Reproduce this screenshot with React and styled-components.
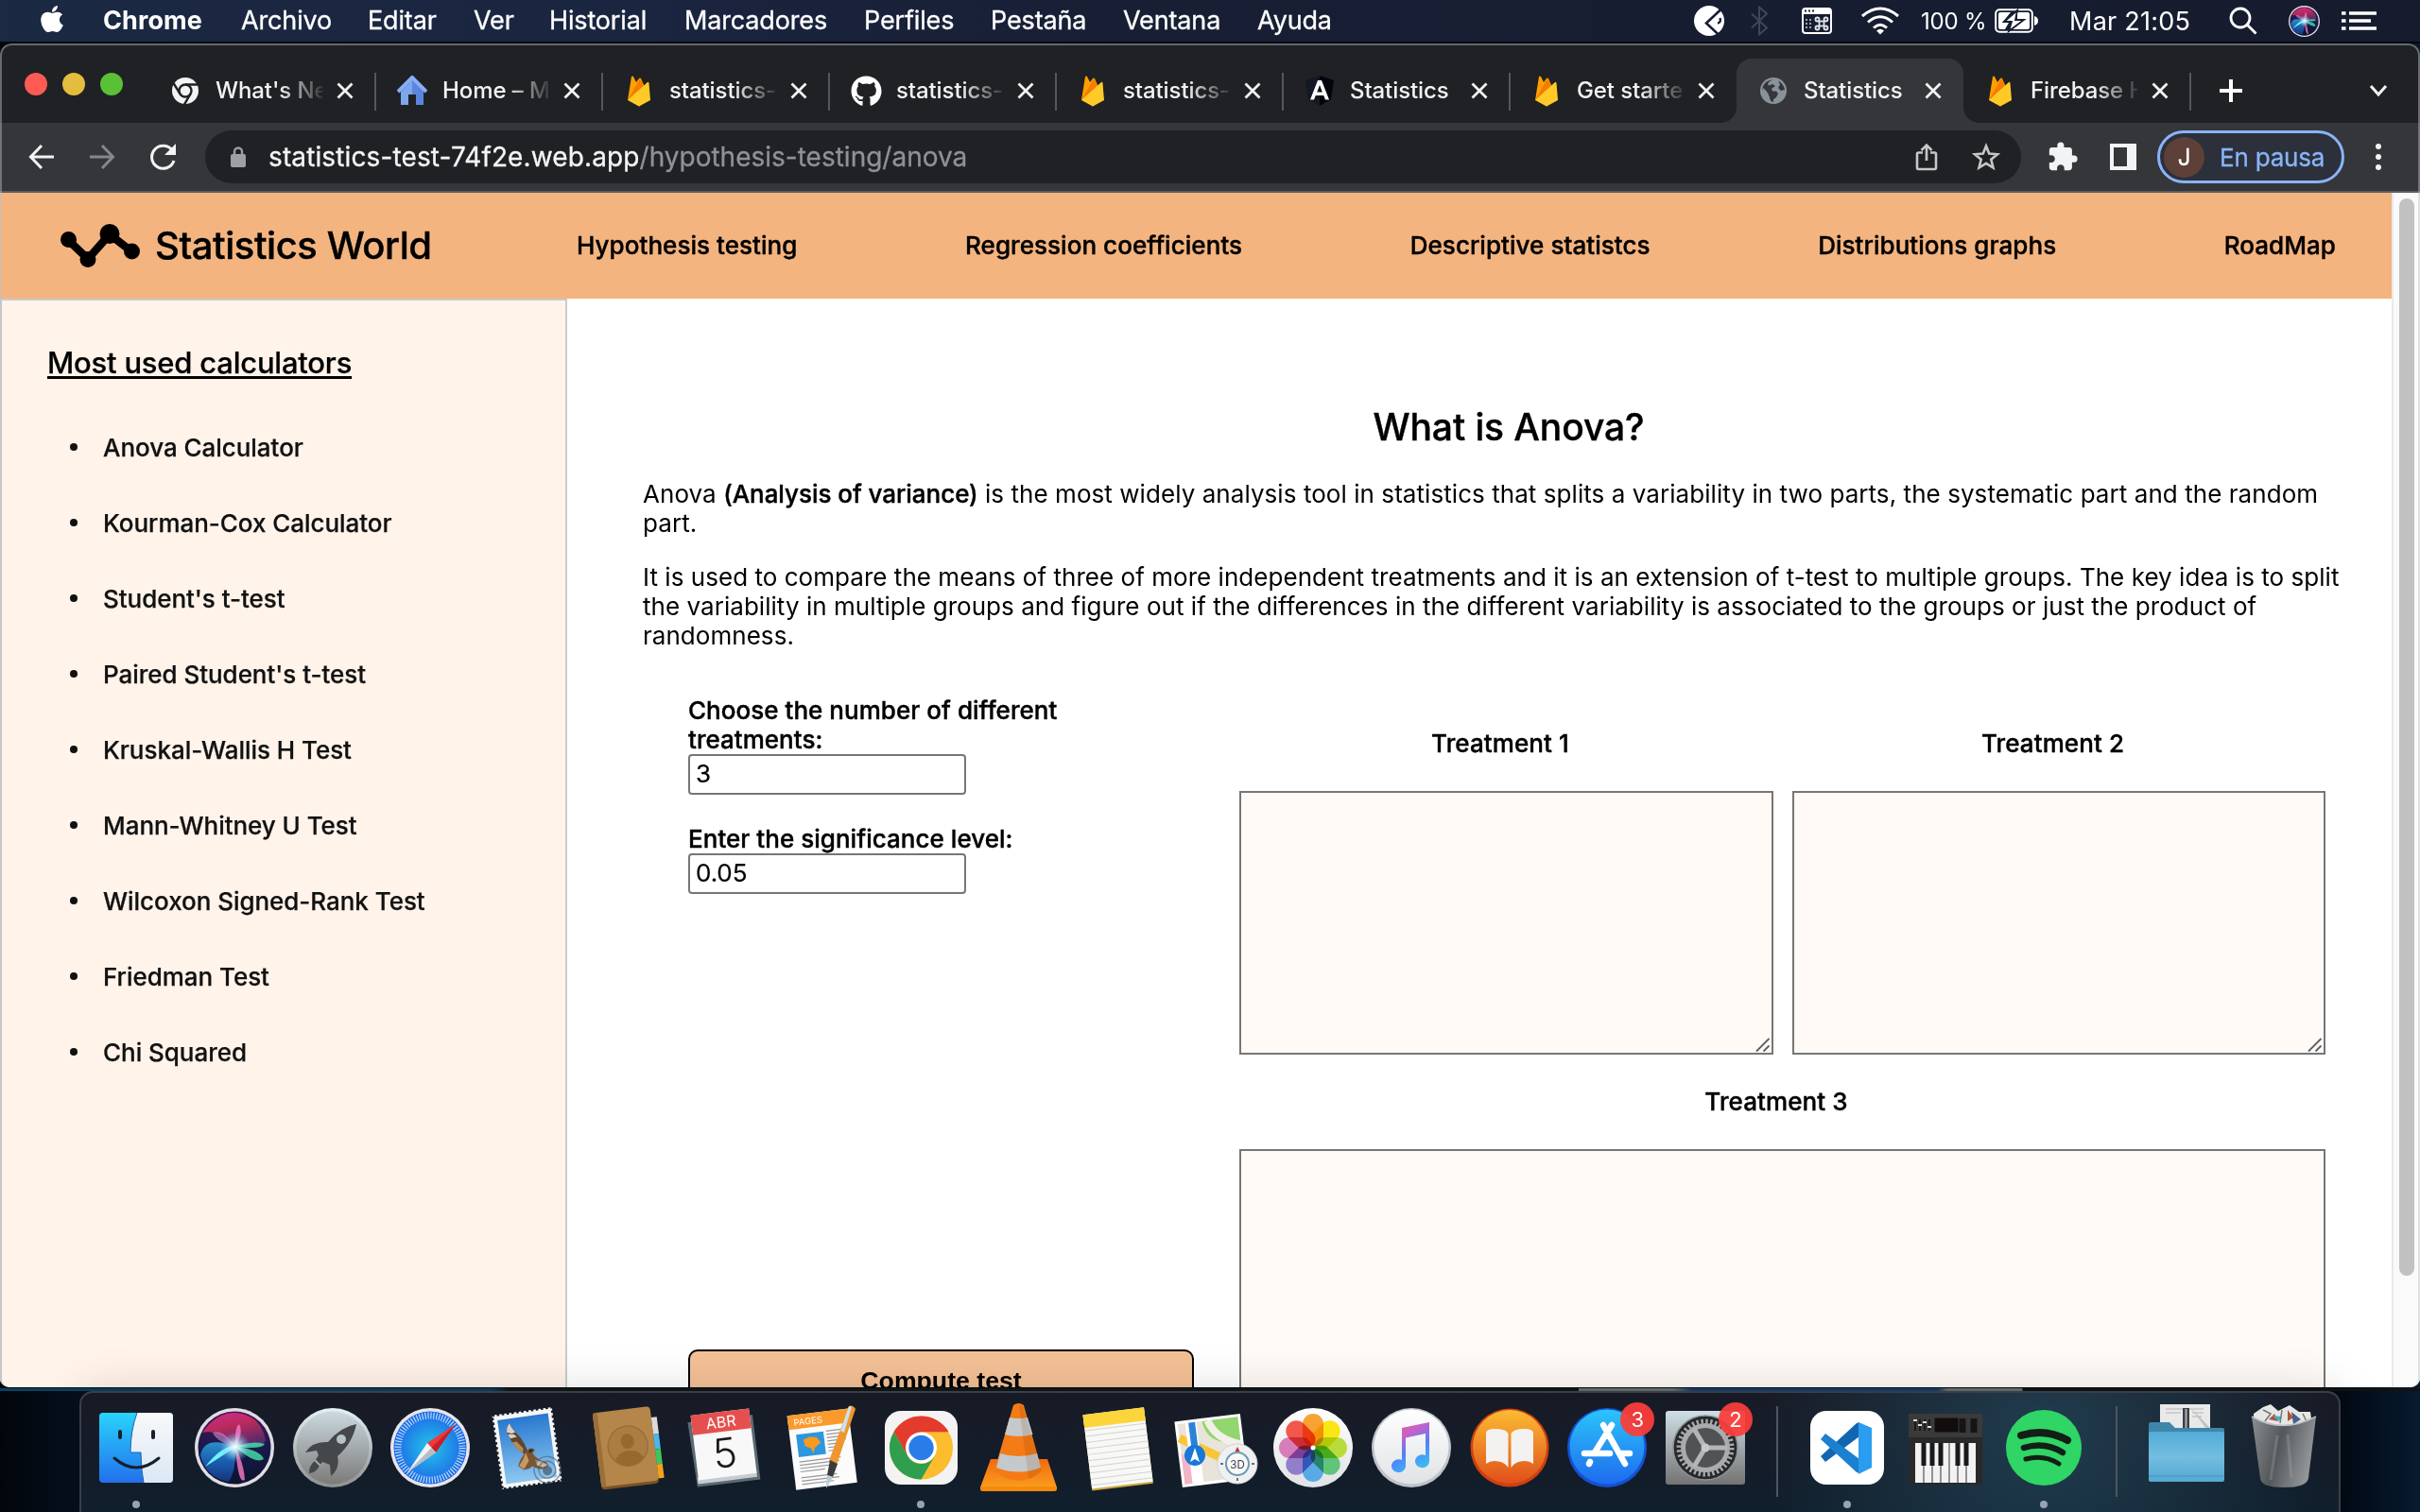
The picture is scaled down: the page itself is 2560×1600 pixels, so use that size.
import React from "react";
import styled, { createGlobalStyle, css } from "styled-components";
import { FaApple, FaGithub } from "react-icons/fa";
import { MdExtension } from "react-icons/md";

const Global = createGlobalStyle`
  *, *::before, *::after { box-sizing: border-box; }
  html, body { margin: 0; padding: 0; }
  body { font-family: Inter, "Liberation Sans", sans-serif; background: #050b14; overflow: hidden; }
  svg { display: block; flex: none; }
`;

const mediumText = css`
  font-weight: 500;
  -webkit-text-stroke: 0.4px currentColor;
`;

/* ---------- desktop ---------- */

const Desktop = styled.div`
  width: 2560px;
  height: 1600px;
  display: flex;
  flex-direction: column;
  overflow: hidden;
  background:
    linear-gradient(90deg, #0b3f5c 0 520px, #101716 540px 1670px, #66706c 1670px 1770px, #173d6b 1790px 2050px, #66706c 2060px 2139px, #101313 2140px) 0 1469px / 100% 3px no-repeat,
    linear-gradient(90deg, #02060c, #06101d 84px, #030a14 2476px, #071a30);
`;

const MenuBar = styled.header`
  height: 46px;
  flex: none;
  display: flex;
  align-items: center;
  padding: 0 46px 0 42px;
  border-bottom: 2px solid #03070f;
  background: linear-gradient(90deg, #1c2942 0%, #1a2540 25%, #181f35 45%, #161c2d 100%);
  color: #fff;
`;

const AppleSlot = styled.div`
  width: 67px;
  padding-bottom: 5px;
`;

const MenuItem = styled.span`
  width: ${(p) => p.$w}px;
  flex: none;
  font-size: 27px;
  line-height: 44px;
  white-space: nowrap;
  letter-spacing: ${(p) => (p.$bold ? 0.1 : -0.15)}px;
  font-weight: ${(p) => (p.$bold ? 700 : 400)};
  -webkit-text-stroke: ${(p) => (p.$bold ? 0 : 0.3)}px currentColor;
`;

const StatusArea = styled.div`
  margin-left: auto;
  display: flex;
  align-items: center;
  height: 44px;
`;

const StatusItem = styled.div`
  width: ${(p) => p.$w}px;
  flex: none;
  display: flex;
  align-items: center;
  font-size: ${(p) => p.$size || 27}px;
  letter-spacing: ${(p) => p.$ls || 0}px;
  white-space: nowrap;
`;

/* ---------- browser window ---------- */

const Window = styled.section`
  position: relative;
  height: 1422px;
  flex: none;
  display: flex;
  flex-direction: column;
  border-radius: 12px 12px 10px 10px;
  overflow: hidden;
  background: #202124;
  &::after {
    content: "";
    position: absolute;
    inset: 0;
    border: 2px solid rgba(185, 195, 205, 0.45);
    border-bottom: 0;
    border-radius: 12px 12px 10px 10px;
    pointer-events: none;
  }
`;

const TabStrip = styled.div`
  height: 84px;
  flex: none;
  display: flex;
  align-items: flex-end;
`;

const Lights = styled.div`
  width: 157px;
  height: 84px;
  padding: 31px 0 0 26px;
  display: flex;
  gap: 16px;
`;

const Light = styled.span`
  width: 24px;
  height: 24px;
  border-radius: 50%;
  background: ${(p) => p.$c};
`;

const Tab = styled.div`
  position: relative;
  width: 240px;
  height: 68px;
  flex: none;
  display: flex;
  align-items: center;
  padding-left: 23px;
  ${(p) =>
    p.$sep &&
    css`
      &::after {
        content: "";
        position: absolute;
        right: -1px;
        top: 15px;
        width: 2px;
        height: 40px;
        background: #55575b;
      }
    `}
  ${(p) =>
    p.$active &&
    css`
      background: #35363a;
      border-radius: 16px 16px 0 0;
      &::before {
        content: "";
        position: absolute;
        bottom: 0;
        left: -16px;
        right: -16px;
        height: 16px;
        background:
          radial-gradient(circle at 0 0, transparent 15.5px, #35363a 16px) left / 16px 16px no-repeat,
          radial-gradient(circle at 100% 0, transparent 15.5px, #35363a 16px) right / 16px 16px no-repeat;
      }
    `}
`;

const TabTitle = styled.span`
  width: 113px;
  margin: 0 15px 0 16px;
  white-space: nowrap;
  font-size: 24px;
  letter-spacing: -0.1px;
  line-height: 34px;
  color: #f1f3f4;
  font-weight: 500;
  ${(p) =>
    p.$fade &&
    css`
      mask-image: linear-gradient(90deg, #000 60%, rgba(0, 0, 0, 0.1) 100%);
    `}
`;

const StripEnd = styled.div`
  flex: 1;
  height: 68px;
  display: flex;
  align-items: center;
  justify-content: space-between;
  padding: 0 34px 0 31px;
`;

const Toolbar = styled.div`
  height: 74px;
  flex: none;
  display: flex;
  align-items: center;
  padding-left: 30px;
  border-bottom: 2px solid #5b5c61;
  background: #35363a;
`;

const NavIcons = styled.div`
  width: 187px;
  display: flex;
  gap: 36px;
`;

const Omnibox = styled.div`
  width: 1921px;
  height: 56px;
  display: flex;
  align-items: center;
  padding: 0 22px 0 27px;
  border-radius: 28px;
  background: #202124;
`;

const Url = styled.span`
  flex: 1;
  margin-left: 24px;
  font-size: 28px;
  line-height: 36px;
  color: #f4f5f6;
  -webkit-text-stroke: 0.3px currentColor;
  b {
    font-weight: 400;
    letter-spacing: 0.12px;
  }
  em {
    font-style: normal;
    color: #8f9195;
  }
`;

const OmniActions = styled.div`
  display: flex;
  gap: 36px;
`;

const ToolIcons = styled.div`
  width: 144px;
  padding-left: 27px;
  display: flex;
  align-items: center;
  gap: 33px;
`;

const ProfilePill = styled.div`
  width: 198px;
  height: 56px;
  display: flex;
  align-items: center;
  border: 3px solid #8ab4f8;
  border-radius: 28px;
  padding-left: 4px;
  background: #2b303b;
  color: #8ab4f8;
  font-size: 26px;
  letter-spacing: -0.2px;
  white-space: nowrap;
  -webkit-text-stroke: 0.3px currentColor;
`;

const Avatar = styled.span`
  width: 43px;
  height: 43px;
  margin-right: 16px;
  border-radius: 50%;
  background: #5d4037;
  color: #fff;
  font-size: 24px;
  line-height: 43px;
  text-align: center;
`;

const Dots = styled.div`
  margin-left: 33px;
  display: grid;
  gap: 5px;
  i {
    width: 6px;
    height: 6px;
    border-radius: 50%;
    background: #f1f3f4;
  }
`;

/* ---------- page ---------- */

const Viewport = styled.div`
  flex: 1;
  min-height: 0;
  display: flex;
  background: #fff;
`;

const Page = styled.div`
  width: 2530px;
  flex: none;
  display: flex;
  flex-direction: column;
`;

const ScrollTrack = styled.div`
  flex: 1;
  padding: 6px 0 0 6px;
  border-left: 2px solid #e9e9e9;
  background: #fafafa;
`;

const ScrollThumb = styled.div`
  width: 16px;
  height: 1140px;
  border-radius: 8px;
  background: #c1c1c1;
`;

const SiteHeader = styled.header`
  height: 112px;
  flex: none;
  display: flex;
  align-items: center;
  padding: 0 59px 0 64px;
  background: #f4b47f;
`;

const Brand = styled.div`
  width: 546px;
  display: flex;
  align-items: center;
  gap: 16px;
  font-size: 40px;
  line-height: 48px;
  letter-spacing: -0.45px;
  white-space: nowrap;
  ${mediumText}
  span {
    padding-bottom: 1px;
  }
`;

const SiteNav = styled.nav`
  flex: 1;
  display: flex;
  justify-content: space-between;
  padding-bottom: 1px;
  font-size: 26px;
  letter-spacing: 0.05px;
  ${mediumText}
`;

const Body = styled.div`
  flex: 1;
  min-height: 0;
  display: flex;
`;

const Sidebar = styled.aside`
  width: 600px;
  flex: none;
  padding: 47px 0 0 48px;
  border: 2px solid #cbcbcb;
  border-width: 2px 2px 0 2px;
  background: #fff3ea;
`;

const SideHeading = styled.h2`
  margin: 0;
  font-size: 31px;
  line-height: 38px;
  font-weight: 500;
  -webkit-text-stroke: 0.25px currentColor;
  letter-spacing: -0.22px;
  text-decoration: underline;
  text-decoration-thickness: 3px;
  text-underline-offset: 3px;
  text-decoration-skip-ink: none;
`;

const CalcList = styled.ul`
  list-style: none;
  margin: 30px 0 0;
  padding: 0 0 0 24px;
`;

const CalcItem = styled.li`
  height: 80px;
  display: flex;
  align-items: center;
  font-size: 26px;
  font-weight: 500;
  -webkit-text-stroke: 0.25px currentColor;
  letter-spacing: -0.04px;
  color: #111;
  &::before {
    content: "";
    width: 8px;
    height: 8px;
    margin-right: 27px;
    border-radius: 50%;
    background: #111;
  }
`;

const Main = styled.main`
  flex: 1;
  padding: 112px 50px 0 80px;
`;

const Title = styled.h1`
  margin: 0;
  padding-left: 32px;
  text-align: center;
  font-size: 39px;
  line-height: 48px;
  letter-spacing: -0.1px;
  ${mediumText}
`;

const Para = styled.p`
  margin: ${(p) => p.$mt}px 0 0;
  font-size: 26px;
  line-height: 31px;
  letter-spacing: ${(p) => p.$ls}px;
  white-space: nowrap;
  b {
    letter-spacing: -0.05px;
    ${mediumText}
  }
`;

const Form = styled.div`
  display: flex;
  margin-top: 48px;
  padding-left: 48px;
`;

const Controls = styled.div`
  width: 535px;
  margin-right: 48px;
`;

const Field = styled.label`
  display: block;
  width: 420px;
  margin-bottom: 31px;
  font-size: 26px;
  line-height: 31px;
  letter-spacing: 0.03px;
  ${mediumText}
`;

const Input = styled.input`
  display: block;
  width: 294px;
  height: 43px;
  margin: 0;
  padding: 1px 6px 4px;
  border: 2px solid #767676;
  border-radius: 4px;
  font: 400 26px Inter, "Liberation Sans", sans-serif;
  letter-spacing: -0.1px;
  -webkit-text-stroke: 0.2px currentColor;
`;

const Compute = styled.button`
  width: 100%;
  height: 64px;
  margin-top: 451px;
  padding: 0;
  border: 2px solid #000;
  border-radius: 10px;
  background: #f4c196;
  color: #000;
  font: 700 26.67px/62px "Liberation Sans", Arial, sans-serif;
`;

const Treatments = styled.div`
  flex: none;
  width: 1149px;
  display: grid;
  grid-template-columns: 565px 564px;
  column-gap: 20px;
  align-content: start;
  padding-top: 1px;
`;

const Treatment = styled.div`
  grid-column: ${(p) => (p.$wide ? "1 / -1" : "auto")};
  padding-top: 34px;
`;

const TreatmentName = styled.div`
  text-align: center;
  padding-right: 13px;
  font-size: 26px;
  line-height: 32px;
  letter-spacing: 0.1px;
  ${mediumText}
`;

const AreaBox = styled.div`
  position: relative;
  height: 279px;
  margin-top: 34px;
`;

const Area = styled.textarea`
  display: block;
  width: 100%;
  height: 100%;
  border: 2px solid #767676;
  background: #fffaf6;
  resize: none;
`;

const Grip = styled.svg`
  position: absolute;
  right: 3px;
  bottom: 2px;
`;

/* ---------- dock ---------- */

const Dock = styled.footer`
  position: relative;
  width: 2392px;
  height: 140px;
  flex: none;
  margin: 4px 0 0 84px;
  display: flex;
  padding-left: 6px;
  border: 2px solid #3a3f48;
  border-radius: 14px 14px 0 0;
  background:
    radial-gradient(ellipse 300px 260px at 2076px 40px, rgba(36, 72, 92, 0.75), rgba(36, 72, 92, 0)),
    linear-gradient(180deg, #181b26, #141c29 55%, #10202d);
  box-shadow: 0 0 50px rgba(0, 0, 0, 0.15);
`;

const Slot = styled.div`
  position: relative;
  width: 103.75px;
  height: 126px;
  flex: none;
`;

const Running = styled.i`
  position: absolute;
  left: 48px;
  top: 114px;
  width: 8px;
  height: 8px;
  border-radius: 50%;
  background: #98a2b0;
`;

const Badge = styled.span`
  position: absolute;
  left: 66px;
  top: 10px;
  width: 36px;
  height: 36px;
  border-radius: 50%;
  background: rgba(250, 62, 58, 0.94);
  color: #fff;
  font-size: 22px;
  line-height: 36px;
  text-align: center;
`;

const Divider = styled.i`
  width: 2px;
  height: 96px;
  margin: 14px ${(p) => p.$r}px 0 ${(p) => p.$l}px;
  flex: none;
  background: #4e5560;
`;

/* ---------- small drawings ---------- */

const Firebase = () => (
  <svg width="24" height="33" viewBox="0 0 24 33">
    <path d="M0 26 4 1Q5 0 6 1L9 7 12 3Q13 2 14 3L24 26Z" fill="#ffa000" />
    <path d="M0 26 13 3 17 11Z" fill="#f57c00" />
    <path d="M0 26 21 7Q22 6 22.500 8L24 26 13 32Q12 33 11 32Z" fill="#ffca28" />
  </svg>
);
const ChromeMono = () => (
  <svg width="30" height="30" viewBox="0 0 30 30">
    <circle cx="15" cy="15" r="14" fill="#f1f3f4" />
    <g stroke="#202124" strokeWidth="2.400" fill="none">
      <circle cx="15" cy="15" r="6.500" />
      <path d="M15 8.500H28M9.400 18.200 2.500 7M20.600 18.200 14 29.500" />
    </g>
    <circle cx="15" cy="15" r="3.800" fill="#f1f3f4" />
  </svg>
);
const House = () => (
  <svg width="32" height="32" viewBox="0 0 32 32">
    <path d="M4 14 16 3 28 14V31H20V20H12V31H4Z" fill="#5b86dd" />
    <path d="M4 18 16 5V20H12V31H4Z" fill="#7ea6ee" />
    <path d="M1 17 16 2 31 17" stroke="#88aef3" strokeWidth="4" fill="none" />
  </svg>
);
const Angular = () => (
  <svg width="32" height="34" viewBox="0 0 32 34">
    <path d="M16 1 31 6 28 26 16 33 4 26 1 6Z" fill="#141824" />
    <path d="M16 1 31 6 28 26 16 33Z" fill="#03050b" />
    <path fillRule="evenodd" d="M14 6H18L26 26.500H22L20.200 22H11.800L10 26.500H6ZM16 11 13.200 18.500H18.800Z" fill="#fff" />
  </svg>
);
const Globe = () => (
  <svg width="30" height="30" viewBox="0 0 30 30">
    <circle cx="15" cy="15" r="14" fill="#8a9299" />
    <path d="M16 3.500C10 4 8 8 10 9.500L14 8 17 10 13 13 14 15.500H18L20 18 18 22 15 24V27C10 26 12 22 10 20L3.500 14C3 8 9 3 16 3.500Z" fill="#35363a" />
    <path d="M20 4.500Q26 7.500 27 14L23 15 20 12 22 8.500Z" fill="#35363a" />
    <path d="M4 12Q7 14 10 19L8 23Q3 19 4 12Z" fill="#8a9299" />
    <path d="M11 5 15 6 10 9.500Z" fill="#8a9299" />
  </svg>
);
const Cross = () => (
  <svg width="18" height="18" viewBox="0 0 18 18" stroke="#f1f3f4" strokeWidth="2.800">
    <path d="M1.500 1.500 16.500 16.500M16.500 1.500 1.500 16.500" />
  </svg>
);

const icons = { chrome: ChromeMono, house: House, fire: Firebase, angular: Angular, globe: Globe };

const IconCell = styled.span`
  width: 32px;
  flex: none;
  display: flex;
  justify-content: center;
`;

const tabs = [
  { icon: "chrome", title: "What's Ne", fade: true, sep: true },
  { icon: "house", title: "Home – M", fade: true, sep: true },
  { icon: "fire", title: "statistics-", fade: true, sep: true },
  { icon: "github", title: "statistics-", fade: true, sep: true },
  { icon: "fire", title: "statistics-", fade: true, sep: true },
  { icon: "angular", title: "Statistics", sep: true },
  { icon: "fire", title: "Get starte", fade: true },
  { icon: "globe", title: "Statistics", active: true },
  { icon: "fire", title: "Firebase H", fade: true, sep: true },
];

const menus = [
  ["Chrome", 146, true],
  ["Archivo", 134],
  ["Editar", 112],
  ["Ver", 80],
  ["Historial", 143],
  ["Marcadores", 190],
  ["Perfiles", 134],
  ["Pestaña", 140],
  ["Ventana", 142],
  ["Ayuda", 90],
];

const calculators = [
  "Anova Calculator",
  "Kourman-Cox Calculator",
  "Student's t-test",
  "Paired Student's t-test",
  "Kruskal-Wallis H Test",
  "Mann-Whitney U Test",
  "Wilcoxon Signed-Rank Test",
  "Friedman Test",
  "Chi Squared",
];

/* ---------- dock drawings ---------- */

const Finder = () => (
  <>
    <rect x="13" y="21" width="78" height="74" rx="4" fill="url(#finderL)" />
    <path d="M53 21H87Q91 21 91 25V91Q91 95 87 95H60Q57 80 57 63H46Q46 40 53 21Z" fill="url(#finderR)" />
    <path d="M53 21Q46 40 46 63H57Q57 80 60 95" fill="none" stroke="#1d5fae" strokeWidth="1" />
    <path d="M35 41v6M70 41v6" stroke="#16202c" strokeWidth="4" strokeLinecap="round" />
    <path d="M29 69Q52 89 76 69" fill="none" stroke="#16202c" strokeWidth="3" strokeLinecap="round" />
  </>
);
const Siri = () => (
  <>
    <circle cx="52" cy="58" r="42" fill="#dedde2" />
    <circle cx="52" cy="58" r="38.500" fill="url(#siriBg)" />
    <path d="M18 42Q33 20 54 21 80 24 85 50 82 58 68 56L53 57Q38 38 18 42Z" fill="url(#siriPink)" />
    <path d="M16 66Q20 44 53 57 54 82 46 94 22 90 16 66Z" fill="url(#siriBlue)" />
    <path d="M53 57Q70 50 84 54 82 60 53 57ZM53 57Q80 60 83 70 74 76 53 57Z" fill="#46e4ae" opacity=".8" />
    <path d="M53 57Q62 75 63 92 56 98 53 57ZM53 57Q52 36 57 33 62 42 53 57Z" fill="#ff7cc6" opacity=".8" />
    <path d="M53 57Q40 38 29 42 33 52 53 57Z" fill="#e9a4e8" opacity=".5" />
    <path d="M21 78Q40 54 53 57 42 65 21 78Z" fill="#6ff2f7" />
    <circle cx="53" cy="57" r="16" fill="url(#glow)" />
  </>
);
const Launchpad = () => (
  <>
    <circle cx="52" cy="58" r="42" fill="url(#launchRim)" />
    <circle cx="52" cy="58" r="38.500" fill="url(#launch)" />
    <path d="M77 33Q60 36 47 52 30 51 23 63L35 61 37 66 33 72Q27 76 27 85 35 84 38 77L41 73 49 76 50 88Q60 80 57 67 73 53 77 33Z" fill="#45484b" />
    <circle cx="61" cy="49" r="5" fill="#b6c2c7" />
    <path d="M33 71 39 77" stroke="#a2a9ab" strokeWidth="2" />
  </>
);
const Safari = () => (
  <>
    <circle cx="52" cy="58" r="42" fill="#e6e6ea" />
    <circle cx="52" cy="58" r="38.500" fill="url(#safari)" />
    <circle cx="52" cy="58" r="34" fill="none" stroke="#e7f4ff" strokeWidth="7" strokeDasharray="1.100 1.870" opacity=".85" />
    <path d="M79 33 49 53 58 63Z" fill="#f0383a" />
    <path d="M79 33 53.500 58 58 63Z" fill="#c81e26" />
    <path d="M28 84 49 53 58 63Z" fill="#f2f2f4" />
    <path d="M28 84 53.500 58 58 63Z" fill="#b9bcc2" />
  </>
);
const Mail = () => (
  <g transform="translate(-1.500 0) rotate(-8 52 58)">
    <rect x="20" y="19" width="64" height="79" fill="#f6f6f6" />
    <rect x="20" y="19" width="64" height="79" fill="none" stroke="#171d29" strokeWidth="3" strokeDasharray="2.600 2.600" />
    <rect x="25" y="25" width="54" height="68" fill="url(#sky)" />
    <path d="M37 30 34 34 33 39 35 44 37 50 42 58 47 63 50 65 52 61 50 54 47 47 43 41 40 36Z" fill="#5f452f" />
    <path d="M37 30 34 34 33 39 38 41 42 40 39 35ZM34 41 36 46 43 45 40 42Z" fill="#d9d2c8" />
    <path d="M37 50 42 58 47 63 48 58 42 50Z" fill="#b98a58" />
    <path d="M50 62 55 59 59 60 60 62 57 64 59 68 64 73 70 76 72 80 68 83 61 82 55 78 52 80 46 81 40 76 43 70Z" fill="#7b5532" />
    <path d="M50 63 46 70 41 76 46 80 52 72Z" fill="#c79a62" />
    <path d="M59 72 66 75 71 79 66 81 60 78Z" fill="#c9b79e" />
    <path d="M54 60 58 60 57 63 53 64Z" fill="#3d2a1c" />
    <circle cx="70" cy="84" r="14" fill="none" stroke="#53657b" strokeWidth="1.500" opacity=".65" />
    <circle cx="70" cy="84" r="9" fill="none" stroke="#53657b" strokeWidth="1.500" opacity=".65" />
    <circle cx="70" cy="85" r="5" fill="#4f6377" opacity=".8" />
  </g>
);
const Contacts = () => (
  <g transform="translate(2.500 0) rotate(-7 52 58)">
    <rect x="76" y="29" width="9" height="18" fill="#d9dadb" />
    <rect x="76" y="47" width="9" height="16" fill="#4ab7ea" />
    <rect x="76" y="63" width="9" height="16" fill="#3ec55b" />
    <rect x="76" y="79" width="9" height="15" fill="#f5a11c" />
    <rect x="18" y="19" width="61" height="80" rx="4" fill="#7a5325" />
    <rect x="18" y="17" width="61" height="79" rx="4" fill="#b5864a" />
    <rect x="18" y="17" width="5" height="79" rx="2" fill="#9b6f38" />
    <circle cx="51" cy="56" r="21" fill="#ab7d42" stroke="#9a6e36" strokeWidth="1.500" />
    <ellipse cx="51" cy="51" rx="7" ry="8" fill="#96692f" />
    <path d="M36 70Q40 61 51 61T66 70Q60 77 51 77T36 70Z" fill="#96692f" />
  </g>
);
const Calendar = () => (
  <g transform="translate(-2 0) rotate(-7 52 58)">
    <path d="M18 27H87V96H20Z" fill="#5b6a75" />
    <rect x="21" y="86" width="63" height="7" fill="#c8ccd0" />
    <rect x="22" y="20" width="62" height="69" fill="#f8f8f8" />
    <rect x="22" y="20" width="62" height="21" fill="#e5504e" />
    <text x="53" y="36.500" textAnchor="middle" fontFamily="Inter" fontSize="16" fill="#fff">ABR</text>
    <text x="53" y="79" textAnchor="middle" fontFamily="Inter" fontWeight="300" fontSize="43" fill="#1a1a1a">5</text>
  </g>
);
const Pages = () => (
  <>
    <g transform="rotate(-7 52 58)">
      <rect x="19" y="20" width="65" height="79" fill="#fbfbfb" />
      <rect x="19" y="20" width="65" height="15" fill="#fb9a2c" />
      <text x="25" y="31.500" fontFamily="Inter" fontSize="9.500" fill="#fff">PAGES</text>
      <rect x="26" y="41" width="29" height="24" fill="#2c97dc" />
      <path d="M33 47 40 45 47 46 51 52 44 57 42 63 40 57 34 54Z" fill="#f79a1e" />
      <path d="M58 41H78M58 44.500H78M58 48H74M58 51.500H78M58 55H72M58 58.500H70M58 62H68M26 70H70M26 73.500H68M26 77H66M26 80.500H52M26 87H64M26 90.500H66M26 94H60" stroke="#999" strokeWidth="1.200" />
    </g>
    <path d="M80 14Q84 12 87 17L67 76 59 72Z" fill="#ef962e" />
    <path d="M80 14 83 15 75 42 71 40Z" fill="#cfe0ea" />
    <path d="M60 71 68 75 63 89 57 87Z" fill="#3b3b3d" />
    <path d="M57 87 63 89 56 101Z" fill="#b8cbd8" />
  </>
);
const ChromeIcon = () => (
  <>
    <rect x="14" y="19" width="77" height="78" rx="17" fill="#f3f3f3" />
    <circle cx="52.500" cy="58" r="33.500" fill="#fbbc2e" />
    <path d="M52.500 58 38 66.500 23.500 41.200A33.500 33.500 0 0 1 81.500 41.200H52.500Z" fill="#e33b2e" />
    <path d="M23.500 41.200 38 66.500A16.700 16.700 0 0 0 67 66.500L52.500 91.500A33.500 33.500 0 0 1 23.500 41.200Z" fill="#2f9e4f" />
    <circle cx="52.500" cy="58" r="16.500" fill="#fff" />
    <circle cx="52.500" cy="58" r="13.200" fill="#2a7de9" />
  </>
);
const Vlc = () => (
  <>
    <path d="M22 70H82L92 100Q92 104 88 104H15Q11 104 11 100Z" fill="url(#vlc)" />
    <path d="M11 99H92V102Q92 104 88 104H15Q11 104 11 102Z" fill="#f58a0c" />
    <path d="M46 13Q51.500 9 57 13L76 82Q64 93 51.500 93T26 82Z" fill="#f47b16" />
    <path d="M42 26Q51.500 28 61 26L66.500 44Q51.500 48 37 44Z" fill="#c5c9cb" />
    <path d="M32 64Q51.500 70 71 64L75 79Q51.500 88 28 79Z" fill="#c5c9cb" />
    <path d="M56 14 76 82Q70 89 62 91L52 13Z" fill="#7a3500" opacity=".14" />
  </>
);
const Notes = () => (
  <g transform="rotate(-7 52 58)">
    <rect x="20" y="20" width="65" height="80" fill="#c9a93a" />
    <rect x="20" y="19" width="65" height="79" fill="#f8f8f6" />
    <rect x="20" y="19" width="65" height="14" fill="#fcd53a" />
    <path d="M20 36H85" stroke="#b0aea7" strokeWidth="1" strokeDasharray="1 1" />
    <path d="M20 42H85M20 48.500H85M20 55H85M20 61.500H85M20 68H85M20 74.500H85M20 81H85M20 87.500H85M20 94H85" stroke="#d2d2d0" strokeWidth="1" />
  </g>
);
const Maps = () => (
  <>
    <g transform="translate(2 0) rotate(-7 46 58)">
      <rect x="11" y="26" width="70" height="70" fill="#fff" />
      <rect x="14" y="29" width="64" height="64" fill="#e8e4da" />
      <path d="M40 29Q42 56 78 56V29Z" fill="#93d56f" />
      <path d="M46 29Q52 50 78 58" stroke="#f3f0e8" strokeWidth="8" fill="none" />
      <path d="M14 44 78 84" stroke="#fbc537" strokeWidth="9" />
      <path d="M28 29V93" stroke="#fff" strokeWidth="12" />
      <path d="M14 60V93H22V66Z" fill="#f3b5c6" />
      <path d="M29 29V64" stroke="#2a82d8" strokeWidth="7" />
    </g>
    <circle cx="31" cy="66" r="11" fill="#1877d8" />
    <path d="M31 58 36 73 31 70 26 73Z" fill="#fff" />
    <circle cx="76" cy="75" r="21" fill="#eef0f2" stroke="#cfd3d6" />
    <circle cx="76" cy="75" r="12" fill="#f8f8f8" stroke="#6d9bb0" strokeWidth="2" />
    <path d="M76 57 78.500 62H73.500Z" fill="#d8252b" />
    <path d="M58 75H61M91 75H94M76 90V93" stroke="#444" strokeWidth="1.500" />
    <text x="76" y="79.500" textAnchor="middle" fontFamily="Inter" fontSize="11.500" fill="#3b4148">3D</text>
  </>
);
const petals = ["#f99a22", "#f9e400", "#b4d92c", "#55c070", "#4ea4e6", "#8a74c8", "#d573b5", "#f04a3c"];
const Photos = () => (
  <>
    <circle cx="52" cy="58" r="42" fill="url(#white)" />
    <g style={{ isolation: "isolate" }}>
      {petals.map((c, i) => (
        <rect key={c} x="41" y="22" width="22" height="35" rx="11" fill={c} opacity=".92" transform={`rotate(${i * 45} 52 58)`} style={{ mixBlendMode: "multiply" }} />
      ))}
    </g>
    <circle cx="52" cy="58" r="2.500" fill="#fff" />
  </>
);
const Music = () => (
  <>
    <circle cx="52" cy="58" r="42" fill="#bfc4ca" />
    <circle cx="52" cy="57" r="39.500" fill="url(#white)" />
    <path d="M42 37 71 31V72A7.500 7 0 1 1 67 66V43L46 47.500V77A7.500 7 0 1 1 42 71Z" fill="url(#note)" />
  </>
);
const Books = () => (
  <>
    <circle cx="52" cy="58" r="41.500" fill="#d0400f" />
    <circle cx="52" cy="57" r="39" fill="url(#books)" />
    <path d="M27 42Q28 38 36 38 48 38 50.500 43V79Q46 72 36 72 31 72 27 75ZM77 42Q76 38 68 38 56 38 53.500 43V79Q58 72 68 72 73 72 77 75Z" fill="#f4f2f0" />
  </>
);
const AppStore = () => (
  <>
    <circle cx="52" cy="58" r="42" fill="#1551d4" />
    <circle cx="52" cy="57" r="39.500" fill="url(#store)" />
    <g stroke="#fff" strokeWidth="6.500" strokeLinecap="round" fill="none">
      <path d="M57 34 39 63M48 34 71 75M28 64H55M66 64H76M34 73 33 75" />
    </g>
  </>
);
const Settings = () => (
  <>
    <rect x="10" y="19" width="84" height="78" rx="3" fill="url(#metal)" />
    <circle cx="52" cy="58" r="34" fill="#26282a" stroke="#8b9298" strokeWidth="1.500" />
    <circle cx="52" cy="58" r="28" fill="none" stroke="#a6a8a9" strokeWidth="5" strokeDasharray="2.400 2.490" />
    <circle cx="52" cy="58" r="23.500" fill="#505254" stroke="#a9abac" strokeWidth="5" />
    <path d="M52 58 40 38M52 58H75M52 58 40 78" stroke="#b3b5b6" strokeWidth="5" />
    <circle cx="52" cy="58" r="4.500" fill="#c7c9ca" />
  </>
);
const VsCode = () => (
  <>
    <rect x="13" y="19" width="78" height="78" rx="17" fill="#fff" />
    <path d="M24 67 29 73 65 46V31L62 32Z" fill="#1166b0" />
    <path d="M24 49 29 43 65 70V85L62 84Z" fill="#1b80cf" />
    <path d="M64 31 78 37V79L64 86Z" fill="#2a9df0" />
  </>
);
const Piano = () => (
  <>
    <rect x="13" y="22" width="78" height="75" rx="2" fill="#29292a" />
    <rect x="13" y="22" width="78" height="25" fill="#3a3a3b" />
    <rect x="41" y="27" width="24" height="14" fill="#120d0c" stroke="#111" />
    <path d="M70 27V42M82 27V42" stroke="#151515" strokeWidth="7" />
    <path d="M20 28V40M25 28V40M30 28V40M35 28V40" stroke="#111" strokeWidth="1.500" />
    <path d="M18 29h4M23 34h4M28 31h4M33 36h4" stroke="#ddd" strokeWidth="2" />
    <rect x="20" y="53" width="64" height="42" fill="#f2f2f2" />
    <path d="M29 53V95M38 53V95M47 53V95M56 53V95M65 53V95M74 53V95" stroke="#555" strokeWidth="1.200" />
    <path d="M29 53V77M38 53V77M47 53V77M65 53V77M74 53V77" stroke="#17191c" strokeWidth="5" />
  </>
);
const Spotify = () => (
  <>
    <circle cx="52" cy="58" r="40" fill="#2fd565" />
    <g fill="none" stroke="#121f17" strokeLinecap="round">
      <path d="M28 45Q54 37 77 50" strokeWidth="8" />
      <path d="M31 58Q53 51 72 63" strokeWidth="6.500" />
      <path d="M33 70Q52 65 68 75" strokeWidth="5" />
    </g>
  </>
);
const Folder = () => (
  <>
    <rect x="24" y="12" width="53" height="40" fill="#e9e9e9" />
    <path d="M30 17H70M30 21H46M58 21H70M58 25H68" stroke="#b5b5b5" strokeWidth="1" />
    <path d="M56 15 76 42V36Z" fill="#c2c2c2" />
    <path d="M48 16H55V44H48Z" fill="#3b3f42" />
    <path d="M51.500 17V40" stroke="#aab2b8" strokeWidth="2" />
    <path d="M12 33Q12 31 14 31H34L40 37H90Q92 37 92 39V60H12Z" fill="#3f86ab" />
    <rect x="12" y="41" width="80" height="53" rx="2" fill="url(#folder)" />
    <path d="M12 88H92" stroke="#4493bd" strokeWidth="1" />
  </>
);
const Trash = () => (
  <>
    <path d="M20 22 30 15 38 12 46 19 58 13 68 20 80 20 82 34H20Z" fill="#e6e6e4" />
    <path d="M36 28 42 22 46 30ZM56 18 62 26 56 30Z" fill="#b5523f" />
    <path d="M40 24 50 25 47 30Z" fill="#39b3cf" />
    <path d="M60 20 70 28 62 33Z" fill="#46608e" />
    <path d="M30 18 38 22 32 30M72 22 76 30M50 18 48 32" stroke="#777" strokeWidth="1.500" fill="none" />
    <path d="M18 25Q50 44 86 25L78 90Q77 100 52 100T27 90Z" fill="url(#trash)" />
    <path d="M18 25Q50 44 86 25" fill="none" stroke="#b9bdc0" strokeWidth="1.500" />
    <path d="M45 45 38 92M56 44 60 90" stroke="#a9adaf" strokeWidth="3" opacity=".3" />
  </>
);

const Grad = ({ id, stops, x2 = 0, y2 = 1 }) => (
  <linearGradient id={id} x1="0" y1="0" x2={x2} y2={y2}>
    {stops.map((c, i) => <stop key={i} offset={i / (stops.length - 1)} stopColor={c} />)}
  </linearGradient>
);

const Gradients = () => (
  <svg width="0" height="0">
    <defs>
      <Grad id="finderL" stops={["#2ad3fb", "#2270ec"]} />
      <Grad id="finderR" stops={["#f8f8f9", "#dbe8f5"]} />
      <Grad id="siriBg" stops={["#4a1358", "#181a4a", "#0d1330"]} />
      <Grad id="siriPink" stops={["#d12c8c", "#b82a5c", "#5a2a6a"]} x2={0.4} />
      <Grad id="siriBlue" stops={["#2a8fc8", "#1a5cae", "#16347c"]} />
      <Grad id="launchRim" stops={["#e3f1f6", "#8f9090"]} />
      <Grad id="launch" stops={["#cbd9df", "#7c7b79"]} />
      <Grad id="sky" stops={["#2878d0", "#8ec8f0"]} />
      <Grad id="vlc" stops={["#f06a10", "#fca41e"]} />
      <Grad id="white" stops={["#ffffff", "#e0e2e5"]} />
      <Grad id="note" stops={["#fb5572", "#c860c8", "#5080fb", "#3fb4f5"]} x2={0.4} />
      <Grad id="books" stops={["#fcbb33", "#e04f1b"]} />
      <Grad id="store" stops={["#2bc4fa", "#1e6bee"]} />
      <Grad id="metal" stops={["#cfdfe7", "#747372"]} />
      <Grad id="folder" stops={["#52acd7", "#73bde0", "#55a9d3"]} />
      <Grad id="trash" stops={["#8b8f91", "#55585a", "#929597"]} x2={1} y2={0.3} />
      <radialGradient id="safari"><stop offset="0" stopColor="#25c4e8" /><stop offset="1" stopColor="#1d68e8" /></radialGradient>
      <radialGradient id="glow"><stop offset="0" stopColor="#fff" /><stop offset=".3" stopColor="#d5fbff" stopOpacity=".8" /><stop offset="1" stopColor="#7bf" stopOpacity="0" /></radialGradient>
    </defs>
  </svg>
);

const dockApps = [
  [Finder, { running: true }], [Siri], [Launchpad], [Safari], [Mail], [Contacts], [Calendar], [Pages],
  [ChromeIcon, { running: true }], [Vlc], [Notes], [Maps], [Photos], [Music], [Books],
  [AppStore, { badge: 3 }], [Settings, { badge: 2 }],
];
const dockOpen = [[VsCode, { running: true }], [Piano], [Spotify, { running: true }]];
const dockFiles = [[Folder], [Trash]];

const DockSlots = ({ items }) =>
  items.map(([Art, o = {}], i) => (
    <Slot key={i}>
      <svg width="104" height="110" viewBox="0 0 104 110"><Art /></svg>
      {o.badge && <Badge>{o.badge}</Badge>}
      {o.running && <Running />}
    </Slot>
  ));

const GripLines = () => (
  <Grip width="16" height="16" viewBox="0 0 16 16" stroke="#5f5f5f" strokeWidth="1.800">
    <path d="M1 14.500 14.500 1M8.500 14.500 14.500 8.500" />
  </Grip>
);

export default function App() {
  return (
    <Desktop>
      <Global />
      <MenuBar>
        <AppleSlot><FaApple size={32} style={{ marginLeft: -3 }} /></AppleSlot>
        {menus.map(([label, w, bold]) => <MenuItem key={label} $w={w} $bold={bold}>{label}</MenuItem>)}
        <StatusArea>
          <StatusItem $w={60}>
            <svg width="32" height="32" viewBox="0 0 32 32">
              <circle cx="16" cy="16" r="16" fill="#fff" />
              <path d="M29.500 3 13 18.500 28.500 33" fill="none" stroke="#171d30" strokeWidth="2.600" />
              <path d="M25 18.500Q29 18 27.500 13" fill="none" stroke="#171d30" strokeWidth="2.400" />
            </svg>
          </StatusItem>
          <StatusItem $w={54}>
            <svg width="18" height="32" viewBox="0 0 18 32" fill="none" stroke="#3f465a" strokeWidth="2">
              <path d="M1 8.500 17 23.500 9 30.500V1.500L17 8.500 1 23.500" />
            </svg>
          </StatusItem>
          <StatusItem $w={62}>
            <svg width="32" height="28" viewBox="0 0 32 28">
              <rect x="1" y="1" width="30" height="26" rx="3" fill="none" stroke="#fff" strokeWidth="2" />
              <path d="M1 2H31V7H1Z" fill="#fff" />
              <path d="M3 3.500h2M7 3.500h2M11 3.500h2" stroke="#171d30" strokeWidth="2" />
              <path d="M4 13h2M8 13h2M4 17h2M8 17h2M4 21h2M8 21h2" stroke="#c9ccd4" strokeWidth="1.600" />
              <g fill="none" stroke="#e2e4ea" strokeWidth="1.800">
                <rect x="18.500" y="14.500" width="5" height="5" />
                <circle cx="16.500" cy="12.500" r="2" /><circle cx="25.500" cy="12.500" r="2" /><circle cx="16.500" cy="21.500" r="2" /><circle cx="25.500" cy="21.500" r="2" />
              </g>
            </svg>
          </StatusItem>
          <StatusItem $w={64}>
            <svg width="42" height="30" viewBox="0 0 42 30" fill="none" stroke="#fff" strokeWidth="3">
              <path d="M2 10Q21 -6 40 10M8 16.500Q21 5 34 16.500M14 22.500Q21 16 28 22.500" />
              <path d="M17 25.500Q21 22 25 25.500L21 29.500Z" fill="#fff" stroke="none" />
            </svg>
          </StatusItem>
          <StatusItem $w={78} $size={24} $ls={-0.2}>100 %</StatusItem>
          <StatusItem $w={79}>
            <svg width="46" height="26" viewBox="0 0 46 26">
              <rect x="1.200" y="1.200" width="38.600" height="23.600" rx="4" fill="none" stroke="#fff" strokeWidth="2" />
              <path d="M42 8Q46 9 46 13T42 18Z" fill="#fff" />
              <path d="M4 6Q4 4 6 4H17L8 15H15L11 22H6Q4 22 4 20ZM24 4H35Q37 4 37 6V20Q37 22 35 22H19L33 11H24Z" fill="#fff" />
              <path d="M24 2 10 14H18L15 24 31 12H22Z" fill="#fff" stroke="#171d30" strokeWidth="1.800" />
            </svg>
          </StatusItem>
          <StatusItem $w={169} $ls={0.25}>Mar 21:05</StatusItem>
          <StatusItem $w={63}>
            <svg width="30" height="30" viewBox="0 0 30 30" fill="none" stroke="#fff" strokeWidth="2.800">
              <circle cx="12" cy="12" r="10" /><path d="M19 19 28.500 28.500" />
            </svg>
          </StatusItem>
          <StatusItem $w={56}>
            <svg width="33" height="33" viewBox="10 16 84 84"><Siri /></svg>
          </StatusItem>
          <StatusItem $w={37}>
            <svg width="37" height="22" viewBox="0 0 37 22" stroke="#fff" strokeWidth="3.600">
              <path d="M0 3H4.500M8 3H37M0 11H4.500M8 11H31M0 19H4.500M8 19H37" />
            </svg>
          </StatusItem>
        </StatusArea>
      </MenuBar>

      <Window>
        <TabStrip>
          <Lights><Light $c="#fd5b54" /><Light $c="#e4bd3e" /><Light $c="#5ac038" /></Lights>
          {tabs.map((t, i) => {
            const Icon = icons[t.icon];
            return (
              <Tab key={i} $sep={t.sep} $active={t.active}>
                <IconCell>{Icon ? <Icon /> : <FaGithub size={33} color="#fff" />}</IconCell>
                <TabTitle $fade={t.fade}>{t.title}</TabTitle>
                <Cross />
              </Tab>
            );
          })}
          <StripEnd>
            <svg width="24" height="24" viewBox="0 0 24 24" stroke="#fff" strokeWidth="4"><path d="M12 0V24M0 12H24" /></svg>
            <svg width="20" height="14" viewBox="0 0 20 14" fill="none" stroke="#f1f3f4" strokeWidth="3"><path d="M2 2 10 11 18 2" /></svg>
          </StripEnd>
        </TabStrip>
        <Toolbar>
          <NavIcons>
            <svg width="28" height="28" viewBox="0 0 28 28" fill="none" stroke="#f1f3f4" strokeWidth="3"><path d="M27 14H3M14 2 2.500 14 14 26" /></svg>
            <svg width="28" height="28" viewBox="0 0 28 28" fill="none" stroke="#85878b" strokeWidth="3"><path d="M1 14H25M14 2 25.500 14 14 26" /></svg>
            <svg width="30" height="28" viewBox="0 0 30 28" fill="none" stroke="#f1f3f4" strokeWidth="3"><path d="M24.500 7.500A12 12 0 1 0 26 18" /><path d="M28 0V12H16Z" fill="#f1f3f4" stroke="none" /></svg>
          </NavIcons>
          <Omnibox>
            <svg width="16" height="22" viewBox="0 0 16 22"><rect y="8" width="16" height="14" rx="2" fill="#9aa0a6" /><path d="M4 9V5.500A4 4 0 0 1 12 5.500V9" fill="none" stroke="#9aa0a6" strokeWidth="2.400" /></svg>
            <Url><b>statistics-test-74f2e.web.app</b><em>/hypothesis-testing/anova</em></Url>
            <OmniActions>
              <svg width="24" height="30" viewBox="0 0 24 30" fill="none" stroke="#c6c7c9" strokeWidth="2.600"><path d="M8 10.500H3.500Q2 10.500 2 12V26.500Q2 28 3.500 28H20.500Q22 28 22 26.500V12Q22 10.500 20.500 10.500H16M12 19V2.500M6.500 8 12 2.500 17.500 8" /></svg>
              <svg width="30" height="30" viewBox="0 0 30 30" fill="none" stroke="#c6c7c9" strokeWidth="2.600"><path d="M15 3.500 18.200 11.500 27 12.200 20.300 17.800 22.500 26.500 15 21.800 7.500 26.500 9.700 17.800 3 12.200 11.800 11.500Z" /></svg>
            </OmniActions>
          </Omnibox>
          <ToolIcons>
            <MdExtension size={34} color="#f1f3f4" />
            <svg width="28" height="28" viewBox="0 0 28 28"><path fillRule="evenodd" d="M0 0H28V28H0ZM4 4V24H18V4Z" fill="#f1f3f4" /></svg>
          </ToolIcons>
          <ProfilePill><Avatar>J</Avatar>En pausa</ProfilePill>
          <Dots><i /><i /><i /></Dots>
        </Toolbar>

        <Viewport>
          <Page>
            <SiteHeader>
              <Brand>
                <svg width="84" height="46" viewBox="0 0 84 46">
                  <path d="M8 17 29 37 52 11 75 29" fill="none" stroke="#000" strokeWidth="8.500" />
                  <circle cx="8.500" cy="16.500" r="8.500" /><circle cx="29" cy="37.500" r="8.500" /><circle cx="52" cy="10.500" r="10.500" /><circle cx="75.500" cy="29" r="8.500" />
                </svg>
                <span>Statistics World</span>
              </Brand>
              <SiteNav>
                <span>Hypothesis testing</span>
                <span>Regression coefficients</span>
                <span>Descriptive statistcs</span>
                <span>Distributions graphs</span>
                <span>RoadMap</span>
              </SiteNav>
            </SiteHeader>
            <Body>
              <Sidebar>
                <SideHeading>Most used calculators</SideHeading>
                <CalcList>{calculators.map((c) => <CalcItem key={c}>{c}</CalcItem>)}</CalcList>
              </Sidebar>
              <Main>
                <Title>What is Anova?</Title>
                <Para $mt={31} $ls={0.06}>
                  Anova <b>(Analysis of variance)</b> is the most widely analysis tool in statistics that splits a variability in two parts, the systematic part and the random<br />part.
                </Para>
                <Para $mt={26} $ls={0.04}>
                  It is used to compare the means of three of more independent treatments and it is an extension of t-test to multiple groups. The key idea is to split<br />
                  the variability in multiple groups and figure out if the differences in the different variability is associated to the groups or just the product of<br />
                  randomness.
                </Para>
                <Form>
                  <Controls>
                    <Field>Choose the number of different treatments:<Input defaultValue="3" /></Field>
                    <Field>Enter the significance level:<Input defaultValue="0.05" /></Field>
                    <Compute>Compute test</Compute>
                  </Controls>
                  <Treatments>
                    <Treatment><TreatmentName>Treatment 1</TreatmentName><AreaBox><Area /><GripLines /></AreaBox></Treatment>
                    <Treatment><TreatmentName>Treatment 2</TreatmentName><AreaBox><Area /><GripLines /></AreaBox></Treatment>
                    <Treatment $wide><TreatmentName>Treatment 3</TreatmentName><AreaBox><Area /></AreaBox></Treatment>
                  </Treatments>
                </Form>
              </Main>
            </Body>
          </Page>
          <ScrollTrack><ScrollThumb /></ScrollTrack>
        </Viewport>
      </Window>

      <Dock>
        <DockSlots items={dockApps} />
        <Divider $l={23} $r={21.500} />
        <DockSlots items={dockOpen} />
        <Divider $l={24} $r={21} />
        <DockSlots items={dockFiles} />
      </Dock>
      <Gradients />
    </Desktop>
  );
}
